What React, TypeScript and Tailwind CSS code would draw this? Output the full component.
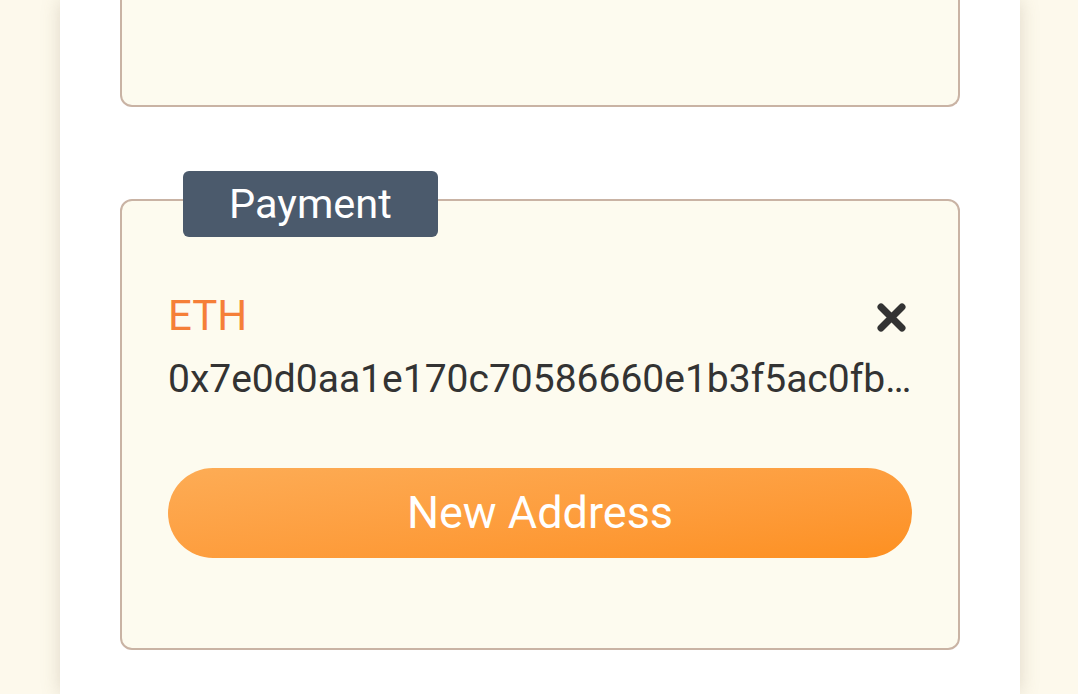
import React from "react";

const address = "0x7e0d0aa1e170c70586660e1b3f5ac0fb4c2d19e8";

function CloseIcon() {
  return (
    <svg width="29" height="29" viewBox="0 0 29 29" aria-hidden="true">
      <path
        d="M4 4 L25 25 M25 4 L4 25"
        stroke="#333333"
        strokeWidth="7"
        strokeLinecap="round"
      />
    </svg>
  );
}

export default function App() {
  return (
    <div
      className="h-[694px] overflow-hidden bg-[#fdf9ec] pl-[60px]"
      style={{ fontFamily: "Roboto, 'Liberation Sans', sans-serif" }}
    >
      <div className="w-[960px] h-full bg-white shadow-[0_0_18px_rgba(120,100,70,0.22)] px-[60px]">
        {/* previous section, scrolled off the top */}
        <div className="h-[107px] bg-[#fdfbef] border-2 border-t-0 border-[#c9b3a4] rounded-b-[12px]" />

        {/* payment section */}
        <div className="relative mt-[92px] h-[451px] bg-[#fdfbef] border-2 border-[#c9b3a4] rounded-[12px] px-[46px] pt-[91px]">
          <div className="absolute left-[61px] -top-[30px] w-[255px] h-[66px] rounded-[6px] bg-[#4b5a6c] text-white text-[41.5px] leading-[66px] text-center">
            Payment
          </div>

          <div className="flex items-center justify-between">
            <span className="text-[42px] leading-[48px] text-[#f57f38]">ETH</span>
            <button className="mr-[6px] mt-[3px]">
              <CloseIcon />
            </button>
          </div>
          <div className="mt-[15px] text-[39px] leading-[48px] text-[#333333] truncate">
            {address}
          </div>

          <button className="mt-[65px] w-full h-[90px] rounded-full bg-linear-to-br from-[#fdac55] to-[#fd9020] text-white text-[45px] leading-[90px]">
            New Address
          </button>
        </div>
      </div>
    </div>
  );
}
